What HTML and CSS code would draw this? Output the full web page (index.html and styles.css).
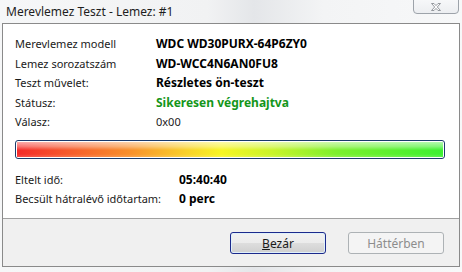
FILE: index.html
```html
<!DOCTYPE html>
<html lang="hu">
<head>
    <meta charset="UTF-8">
    <title>Merevlemez Teszt - Lemez: #1</title>
    <link rel="stylesheet" href="styles.css">
</head>
<body>

    <div class="window">
        <div class="titlebar">
            <span class="title">Merevlemez Teszt - Lemez: #1</span>
            <button class="close-btn" title="Bezárás">
                <svg width="12" height="10" viewBox="0 0 12 10">
                    <path d="M1.5 1.5 L4 1.5 L6 3.6 L8 1.5 L10.5 1.5 L7.3 5 L10.5 8.5 L8 8.5 L6 6.4 L4 8.5 L1.5 8.5 L4.7 5 Z"
                          fill="#fdfdfd" stroke="#8a8e94" stroke-width="0.9" stroke-linejoin="round"/>
                </svg>
            </button>
        </div>

        <div class="client">
            <div class="panel">
                <div class="info">
                    <span class="label">Merevlemez modell</span>
                    <span class="value bold">WDC WD30PURX-64P6ZY0</span>
                    <span class="label">Lemez sorozatszám</span>
                    <span class="value bold">WD-WCC4N6AN0FU8</span>
                    <span class="label">Teszt művelet:</span>
                    <span class="value bold">Részletes ön-teszt</span>
                    <span class="label">Státusz:</span>
                    <span class="value bold ok">Sikeresen végrehajtva</span>
                    <span class="label">Válasz:</span>
                    <span class="value">0x00</span>
                </div>

                <div class="progress">
                    <div class="progress-fill"></div>
                </div>

                <div class="times">
                    <span class="label">Eltelt idő:</span>
                    <span class="value bold">05:40:40</span>
                    <span class="label">Becsült hátralévő időtartam:</span>
                    <span class="value bold">0 perc</span>
                </div>
            </div>

            <div class="footer">
                <button class="btn btn-default"><u>B</u>ezár</button>
                <button class="btn" disabled>Háttérben</button>
            </div>
        </div>
    </div>

</body>
</html>
```

FILE: styles.css
```css
body {
    margin: 0;
    padding: 0;
    font-family: 'Noto Sans', 'Open Sans', sans-serif;
    font-size: 12px;
    color: #1a1a1a;
    background: #dfe7f1;
}

.window {
    width: 462px;
    height: 272px;
    overflow: hidden;
    background: linear-gradient(to right, #f6f7f8 0%, #f1f2f3 45%, #e4e6e9 55%, #f3f4f5 70%, #f7f8f9 100%);
}

.titlebar {
    height: 23px;
    display: flex;
    align-items: flex-start;
    justify-content: space-between;
}

.title {
    padding: 3px 0 0 6px;
    font-size: 12px;
    color: #1e1e1e;
}

.close-btn {
    width: 46px;
    height: 17px;
    margin: -3px 3px 0 0;
    padding: 3px 0 0;
    border: 1px solid #9da3aa;
    border-radius: 0 0 4px 4px;
    background: linear-gradient(to bottom, #f8f9fa, #eceef1);
    display: flex;
    align-items: center;
    justify-content: center;
}

.client {
    margin: 0 2px;
    border: 1px solid #8a8a8a;
    background: #f0f0f0;
}

.panel {
    height: 195px;
    padding: 10px 14px 0 12px;
    box-sizing: border-box;
    background: #ffffff;
    border-bottom: 1px solid #a0a0a0;
    font-size: 11px;
}

.info {
    display: grid;
    grid-template-columns: 141px 1fr;
    line-height: 19.5px;
}

.times {
    display: grid;
    grid-template-columns: 164px 1fr;
    line-height: 19.5px;
    margin-top: 11px;
}

.bold {
    font-size: 12px;
    font-weight: bold;
    color: #000000;
}

.ok {
    color: #14961a;
}

.progress {
    margin-top: 8px;
    height: 19px;
    box-sizing: border-box;
    border: 1px solid #1b3b6b;
    border-radius: 3px;
    padding: 1px;
    background: #ffffff;
}

.progress-fill {
    height: 100%;
    background:
        linear-gradient(to bottom, rgba(255, 255, 255, 0.6) 0%, rgba(255, 255, 255, 0.35) 30%, rgba(255, 255, 255, 0) 55%, rgba(255, 255, 255, 0) 80%, rgba(255, 255, 255, 0.15) 100%),
        linear-gradient(to right, #f42a2a 0%, #f65a2c 12%, #f8922c 27%, #f8d22a 40%, #f6f624 48%, #c8f42a 60%, #7cf02e 75%, #3cf032 100%);
}

.footer {
    height: 47px;
    display: flex;
    justify-content: flex-end;
    align-items: flex-start;
    gap: 22px;
    padding: 13px 15px 0 0;
    box-sizing: border-box;
}

.btn {
    width: 96px;
    height: 22px;
    font-family: 'Noto Sans', 'Open Sans', sans-serif;
    font-size: 12px;
    color: #1a1a1a;
    border: 1px solid #707070;
    border-radius: 3px;
    background: linear-gradient(to bottom, #f2f2f2 0%, #ebebeb 50%, #dddddd 51%, #cfcfcf 100%);
    padding: 0;
}

.btn-default {
    border-color: #1c2a8c;
    box-shadow: inset 0 0 0 1px #dff0fb;
}

.btn:disabled {
    color: #8d8d8d;
    border-color: #adb2b5;
    background: #f4f4f4;
}
```
